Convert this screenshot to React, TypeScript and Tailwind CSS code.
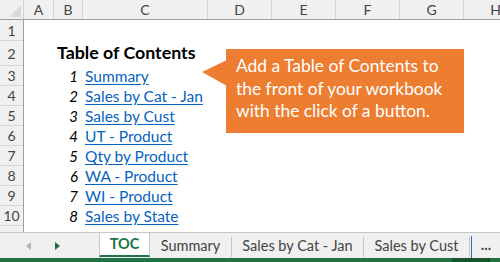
import React from "react";

const cols = [
  { name: "A", w: "w-[30px]" },
  { name: "B", w: "w-[29px]" },
  { name: "C", w: "w-[125px]" },
  { name: "D", w: "w-[64px]" },
  { name: "E", w: "w-[64px]" },
  { name: "F", w: "w-[64px]" },
  { name: "G", w: "w-[64px]" },
  { name: "H", w: "w-[64px]" },
];

const links = [
  "Summary",
  "Sales by Cat - Jan",
  "Sales by Cust",
  "UT - Product",
  "Qty by Product",
  "WA - Product",
  "WI - Product",
  "Sales by State",
];

function ColumnHeader() {
  return (
    <div className="flex h-[20px] shrink-0 border-b border-[#9e9e9e] bg-[#f0f0f0]">
      <div className="relative w-[24px] shrink-0 border-r border-[#d4d4d4]">
        <svg width="24" height="20" className="absolute inset-0">
          <polygon points="21,5 21,17 9,17" fill="#d9d9d9" />
        </svg>
      </div>
      {cols.map((c) => (
        <div
          key={c.name}
          className={`${c.w} shrink-0 border-r border-[#d4d4d4] flex items-center justify-center text-[14px] text-[#444]`}
        >
          {c.name}
        </div>
      ))}
    </div>
  );
}

function RowNum({ n, h }: { n?: number; h: string }) {
  return (
    <div className={`${h} shrink-0 border-b border-[#d4d4d4] flex items-center justify-center text-[14px] text-[#444]`}>
      {n}
    </div>
  );
}

function Callout() {
  return (
    <div className="absolute left-[226px] top-[29px] w-[238px] h-[84px] bg-[#ed7d31] pl-[10px] pt-[6px] text-white text-[17.4px] leading-[22.5px]">
      <svg width="25" height="26" className="absolute left-[-24px] top-[11px]">
        <polygon points="25,0 0,12 25,26" fill="#ed7d31" />
      </svg>
      <div className="whitespace-nowrap">Add a Table of Contents to</div>
      <div className="whitespace-nowrap">the front of your workbook</div>
      <div className="whitespace-nowrap">with the click of a button.</div>
    </div>
  );
}

function Sheet() {
  return (
    <div className="relative flex flex-1 overflow-hidden">
      <div className="w-[24px] shrink-0 border-r border-[#9e9e9e] bg-[#f0f0f0]">
        <RowNum n={1} h="h-[21px]" />
        <RowNum n={2} h="h-[25px]" />
        {[3, 4, 5, 6, 7, 8, 9, 10].map((n) => (
          <RowNum key={n} n={n} h="h-[20px]" />
        ))}
        <RowNum h="h-[20px]" />
      </div>
      <div className="flex-1 bg-white">
        <div className="h-[21px]" />
        <div className="h-[25px] flex items-end pb-[3px]">
          <div className="w-[30px] shrink-0" />
          <div className="pl-[3px] text-[17.8px] font-bold text-black whitespace-nowrap leading-[22px]">
            Table of Contents
          </div>
        </div>
        {links.map((l, i) => (
          <div key={l} className="h-[20px] flex items-end pb-[1px]">
            <div className="w-[30px] shrink-0" />
            <div className="w-[29px] shrink-0 pr-[5px] text-right italic text-[15px] text-black leading-[18px]">
              {i + 1}
            </div>
            <div className="pl-[2px] text-[15.5px] leading-[18px] text-[#0563c1] underline underline-offset-2 whitespace-nowrap">
              {l}
            </div>
          </div>
        ))}
      </div>
      <Callout />
    </div>
  );
}

function TabBar() {
  return (
    <div className="h-[30px] shrink-0 flex flex-col bg-[#f0f0f0] border-t border-[#c6c6c6]">
      <div className="flex flex-1 text-[14.5px] text-[#444]">
        <div className="w-[99px] shrink-0 flex items-center">
          <svg width="99" height="25">
            <polygon points="31,9 31,17 26,13" fill="#b4b4b4" />
            <polygon points="55,9 55,17 60,13" fill="#1e6b3e" />
          </svg>
        </div>
        <div className="w-[51px] shrink-0 h-[24px] bg-white border-x border-[#c6c6c6] border-b-2 border-b-[#217346] flex items-center justify-center font-bold text-[#217346]">
          TOC
        </div>
        <div className="w-[81px] shrink-0 flex items-center justify-center">Summary</div>
        <div className="w-px h-[20px] mt-[4px] bg-[#c6c6c6]" />
        <div className="w-[131px] shrink-0 flex items-center justify-center">Sales by Cat - Jan</div>
        <div className="w-px h-[20px] mt-[4px] bg-[#c6c6c6]" />
        <div className="w-[105px] shrink-0 flex items-center justify-center">Sales by Cust</div>
        <div className="w-px h-[20px] mt-[4px] bg-[#c6c6c6]" />
        <div className="w-px ml-px h-[22px] mt-[3px] bg-[#2b6fb6]" />
        <div className="flex-1 flex items-center justify-center pb-[2px] font-bold">...</div>
      </div>
      <div className="h-[4px] flex shrink-0">
        <div className="flex-1 bg-[#217346]" />
        <div className="w-[38px] bg-[#17532f]" />
        <div className="w-[10px] bg-[#217346]" />
      </div>
    </div>
  );
}

export default function App() {
  return (
    <div className="w-[500px] h-[262px] flex flex-col overflow-hidden bg-white font-['Lato',sans-serif]">
      <ColumnHeader />
      <Sheet />
      <TabBar />
    </div>
  );
}
